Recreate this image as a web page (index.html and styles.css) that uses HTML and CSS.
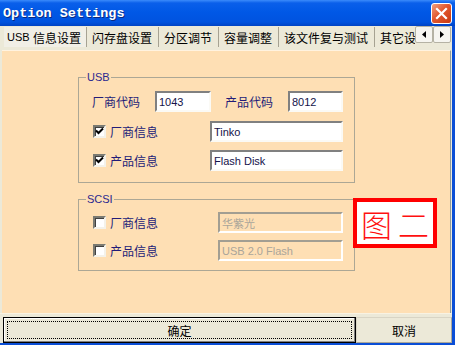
FILE: index.html
```html
<!DOCTYPE html>
<html lang="zh-CN">

<head>
    <meta charset="UTF-8">
    <title>Option Settings</title>
    <link rel="stylesheet" href="styles.css">
</head>

<body>
    <div class="window">
        <div class="titlebar">
            <span class="title">Option Settings</span>
            <span class="close">
                <svg width="13" height="13" viewBox="0 0 13 13">
                    <path d="M2 2 L11 11 M11 2 L2 11" stroke="#fff" stroke-width="2.2" stroke-linecap="square" fill="none"/>
                </svg>
            </span>
        </div>

        <div class="main">
            <div class="tabbar">
                <div class="tabs">
                    <div class="tab active"><span class="latin">USB</span>&nbsp;信息设置</div>
                    <div class="tab">闪存盘设置</div>
                    <div class="tab">分区调节</div>
                    <div class="tab">容量调整</div>
                    <div class="tab">该文件复与测试</div>
                    <div class="tab">其它设置</div>
                </div>
                <div class="scroll">
                    <span class="arrow">
                        <svg width="4" height="7" viewBox="0 0 4 7"><path d="M4 0 L0 3.5 L4 7 Z" fill="#000"/></svg>
                    </span>
                    <span class="arrow">
                        <svg width="4" height="7" viewBox="0 0 4 7"><path d="M0 0 L4 3.5 L0 7 Z" fill="#000"/></svg>
                    </span>
                </div>
            </div>

            <div class="panel">
                <div class="group usb">
                    <span class="legend">USB</span>
                    <div class="row">
                        <span class="label code">厂商代码</span>
                        <span class="field short">1043</span>
                        <span class="label code second">产品代码</span>
                        <span class="field short">8012</span>
                    </div>
                    <div class="row">
                        <span class="check on">
                            <svg width="9" height="9" viewBox="0 0 9 9"><path d="M1 3.5 L3.5 6 L8 1.5" stroke="#000" stroke-width="2" fill="none"/></svg>
                        </span>
                        <span class="label">厂商信息</span>
                        <span class="field wide">Tinko</span>
                    </div>
                    <div class="row">
                        <span class="check on">
                            <svg width="9" height="9" viewBox="0 0 9 9"><path d="M1 3.5 L3.5 6 L8 1.5" stroke="#000" stroke-width="2" fill="none"/></svg>
                        </span>
                        <span class="label">产品信息</span>
                        <span class="field wide">Flash Disk</span>
                    </div>
                </div>

                <div class="group scsi">
                    <span class="legend">SCSI</span>
                    <div class="row">
                        <span class="check"></span>
                        <span class="label">厂商信息</span>
                        <span class="field off">华紫光</span>
                    </div>
                    <div class="row">
                        <span class="check"></span>
                        <span class="label">产品信息</span>
                        <span class="field off">USB 2.0 Flash</span>
                    </div>
                </div>

                <div class="stamp">图二</div>
            </div>

            <div class="actions">
                <button class="btn default"><span class="focus">确定</span></button>
                <button class="btn cancel">取消</button>
            </div>
        </div>
    </div>
</body>

</html>
```

FILE: styles.css
```css
body {
    margin: 0;
}

.window {
    width: 455px;
    height: 345px;
    display: flex;
    flex-direction: column;
    background-color: #ece9d8;
    font-family: "Liberation Sans", "Noto Sans CJK SC", sans-serif;
    font-size: 12px;
    overflow: hidden;
}

.titlebar {
    height: 26px;
    flex: none;
    box-sizing: border-box;
    padding: 0 3px;
    display: flex;
    align-items: center;
    justify-content: space-between;
    background: linear-gradient(#3b8bfb 0, #0a5fea 3px, #0058e6 12px, #0053df 22px, #0043c4 26px);
}

.title {
    font-family: "Liberation Mono", monospace;
    font-weight: bold;
    font-size: 13.5px;
    color: #fff;
    text-shadow: 1px 1px 0 #0a2a80;
}

.close {
    width: 21px;
    height: 21px;
    box-sizing: border-box;
    border: 1px solid #fff;
    border-radius: 3px;
    background: linear-gradient(135deg, #f0a080 0%, #e2582e 45%, #c8390f 100%);
    display: flex;
    align-items: center;
    justify-content: center;
}

.main {
    flex: 1;
    display: flex;
    flex-direction: column;
    border-right: 3px solid #0a4ed6;
    border-bottom: 3px solid #0a4ed6;
}

.tabbar {
    height: 24px;
    flex: none;
    display: flex;
}

.tabs {
    flex: 1;
    display: flex;
    align-items: flex-start;
    padding-left: 4px;
    overflow: hidden;
}

.tab {
    height: 20px;
    margin-top: 1px;
    padding: 0 6px 0 5px;
    display: flex;
    align-items: center;
    white-space: nowrap;
    color: #000;
    border-left: 1px solid #a6a292;
}

.tab.active {
    border-left: none;
    padding: 0 5px 0 3px;
    background-color: #f1efe6;
}

.latin {
    font-size: 11px;
}

.scroll {
    display: flex;
    margin-right: 1px;
}

.arrow {
    width: 18px;
    height: 17px;
    box-sizing: border-box;
    border: 1px solid #b5b2a4;
    border-radius: 2px;
    background-color: #f6f5f0;
    display: flex;
    align-items: center;
    justify-content: center;
}

.panel {
    position: relative;
    height: 263px;
    flex: none;
    box-sizing: border-box;
    margin: 0 1px 0 2px;
    padding-left: 76px;
    padding-top: 27px;
    background-color: #fedfb4;
    border-top: 1px solid #fff3e0;
    border-right: 1px solid #919b9c;
}

.group {
    position: relative;
    width: 277px;
    box-sizing: border-box;
    border: 1px solid #aca795;
    padding: 13px 11px 0 13px;
    color: #231c78;
}

.group.usb {
    height: 106px;
    margin-top: -1px;
}

.group.scsi {
    height: 72px;
    margin-top: 16px;
    padding-top: 12px;
}

.legend {
    position: absolute;
    top: -8px;
    left: 7px;
    padding: 0 1px;
    line-height: 14px;
    font-size: 11px;
    color: #2b2890;
    background-color: #fedfb4;
}

.row {
    height: 21px;
    display: flex;
    align-items: center;
}

.usb .row + .row {
    margin-top: 8px;
}

.usb .row:nth-child(3) {
    margin-top: 9px;
}

.scsi .row + .row {
    margin-top: 7px;
}

.label {
    margin-left: 4px;
    white-space: nowrap;
}

.label.code {
    width: 63px;
    margin-left: 0;
}

.label.second {
    margin-left: 14px;
}

.check {
    width: 13px;
    height: 13px;
    margin-left: 1px;
    box-sizing: border-box;
    border: 2px solid;
    border-color: #7a7a72 #f4f2ea #f4f2ea #7a7a72;
    box-shadow: inset 1px 1px 0 #404040;
    background-color: #fff;
    display: flex;
    align-items: center;
    justify-content: center;
}

.field {
    height: 21px;
    box-sizing: border-box;
    padding: 0 2px;
    border: 2px solid;
    border-color: #808080 #fbfaf5 #fbfaf5 #808080;
    background-color: #fff;
    color: #14124a;
    font-size: 11px;
    display: flex;
    align-items: center;
    white-space: nowrap;
}

.field.short {
    width: 56px;
}

.field.short:last-child {
    width: 55px;
}

.field.wide {
    width: 133px;
    margin-left: auto;
}

.field.off {
    width: 125px;
    margin-left: auto;
    background-color: #fedfb4;
    color: #aaa59a;
    border-color: #a29e92 #fff #fff #a29e92;
}

.stamp {
    position: absolute;
    left: 351px;
    top: 147px;
    width: 84px;
    height: 50px;
    box-sizing: border-box;
    border: 4px solid #ff0000;
    background-color: #fff;
    color: #ff1010;
    font-family: "Noto Sans CJK SC", sans-serif;
    font-weight: 300;
    font-size: 31px;
    line-height: 1;
    letter-spacing: 6px;
    padding-left: 6px;
    white-space: nowrap;
    display: flex;
    align-items: center;
    justify-content: center;
}

.actions {
    flex: 1;
    display: flex;
    padding: 3px 0 0 3px;
    border-top: 1px solid #f8f2e2;
}

.btn {
    height: 26px;
    box-sizing: border-box;
    margin: 0;
    font-family: "Noto Sans CJK SC", sans-serif;
    font-size: 12px;
    color: #000;
    background-color: #ece9d8;
    display: flex;
    align-items: center;
    justify-content: center;
}

.btn.default {
    width: 353px;
    border: 1px solid #000;
    box-shadow: inset -1px -1px 0 #808080, inset 1px 1px 0 #fff;
    padding: 3px;
}

.focus {
    flex: 1;
    align-self: stretch;
    border: 1px dotted #000;
    display: flex;
    align-items: center;
    justify-content: center;
}

.btn.cancel {
    width: 96px;
    border: 1px solid #d8d4c4;
    border-right-color: #aca899;
    border-bottom-color: #aca899;
}
```
